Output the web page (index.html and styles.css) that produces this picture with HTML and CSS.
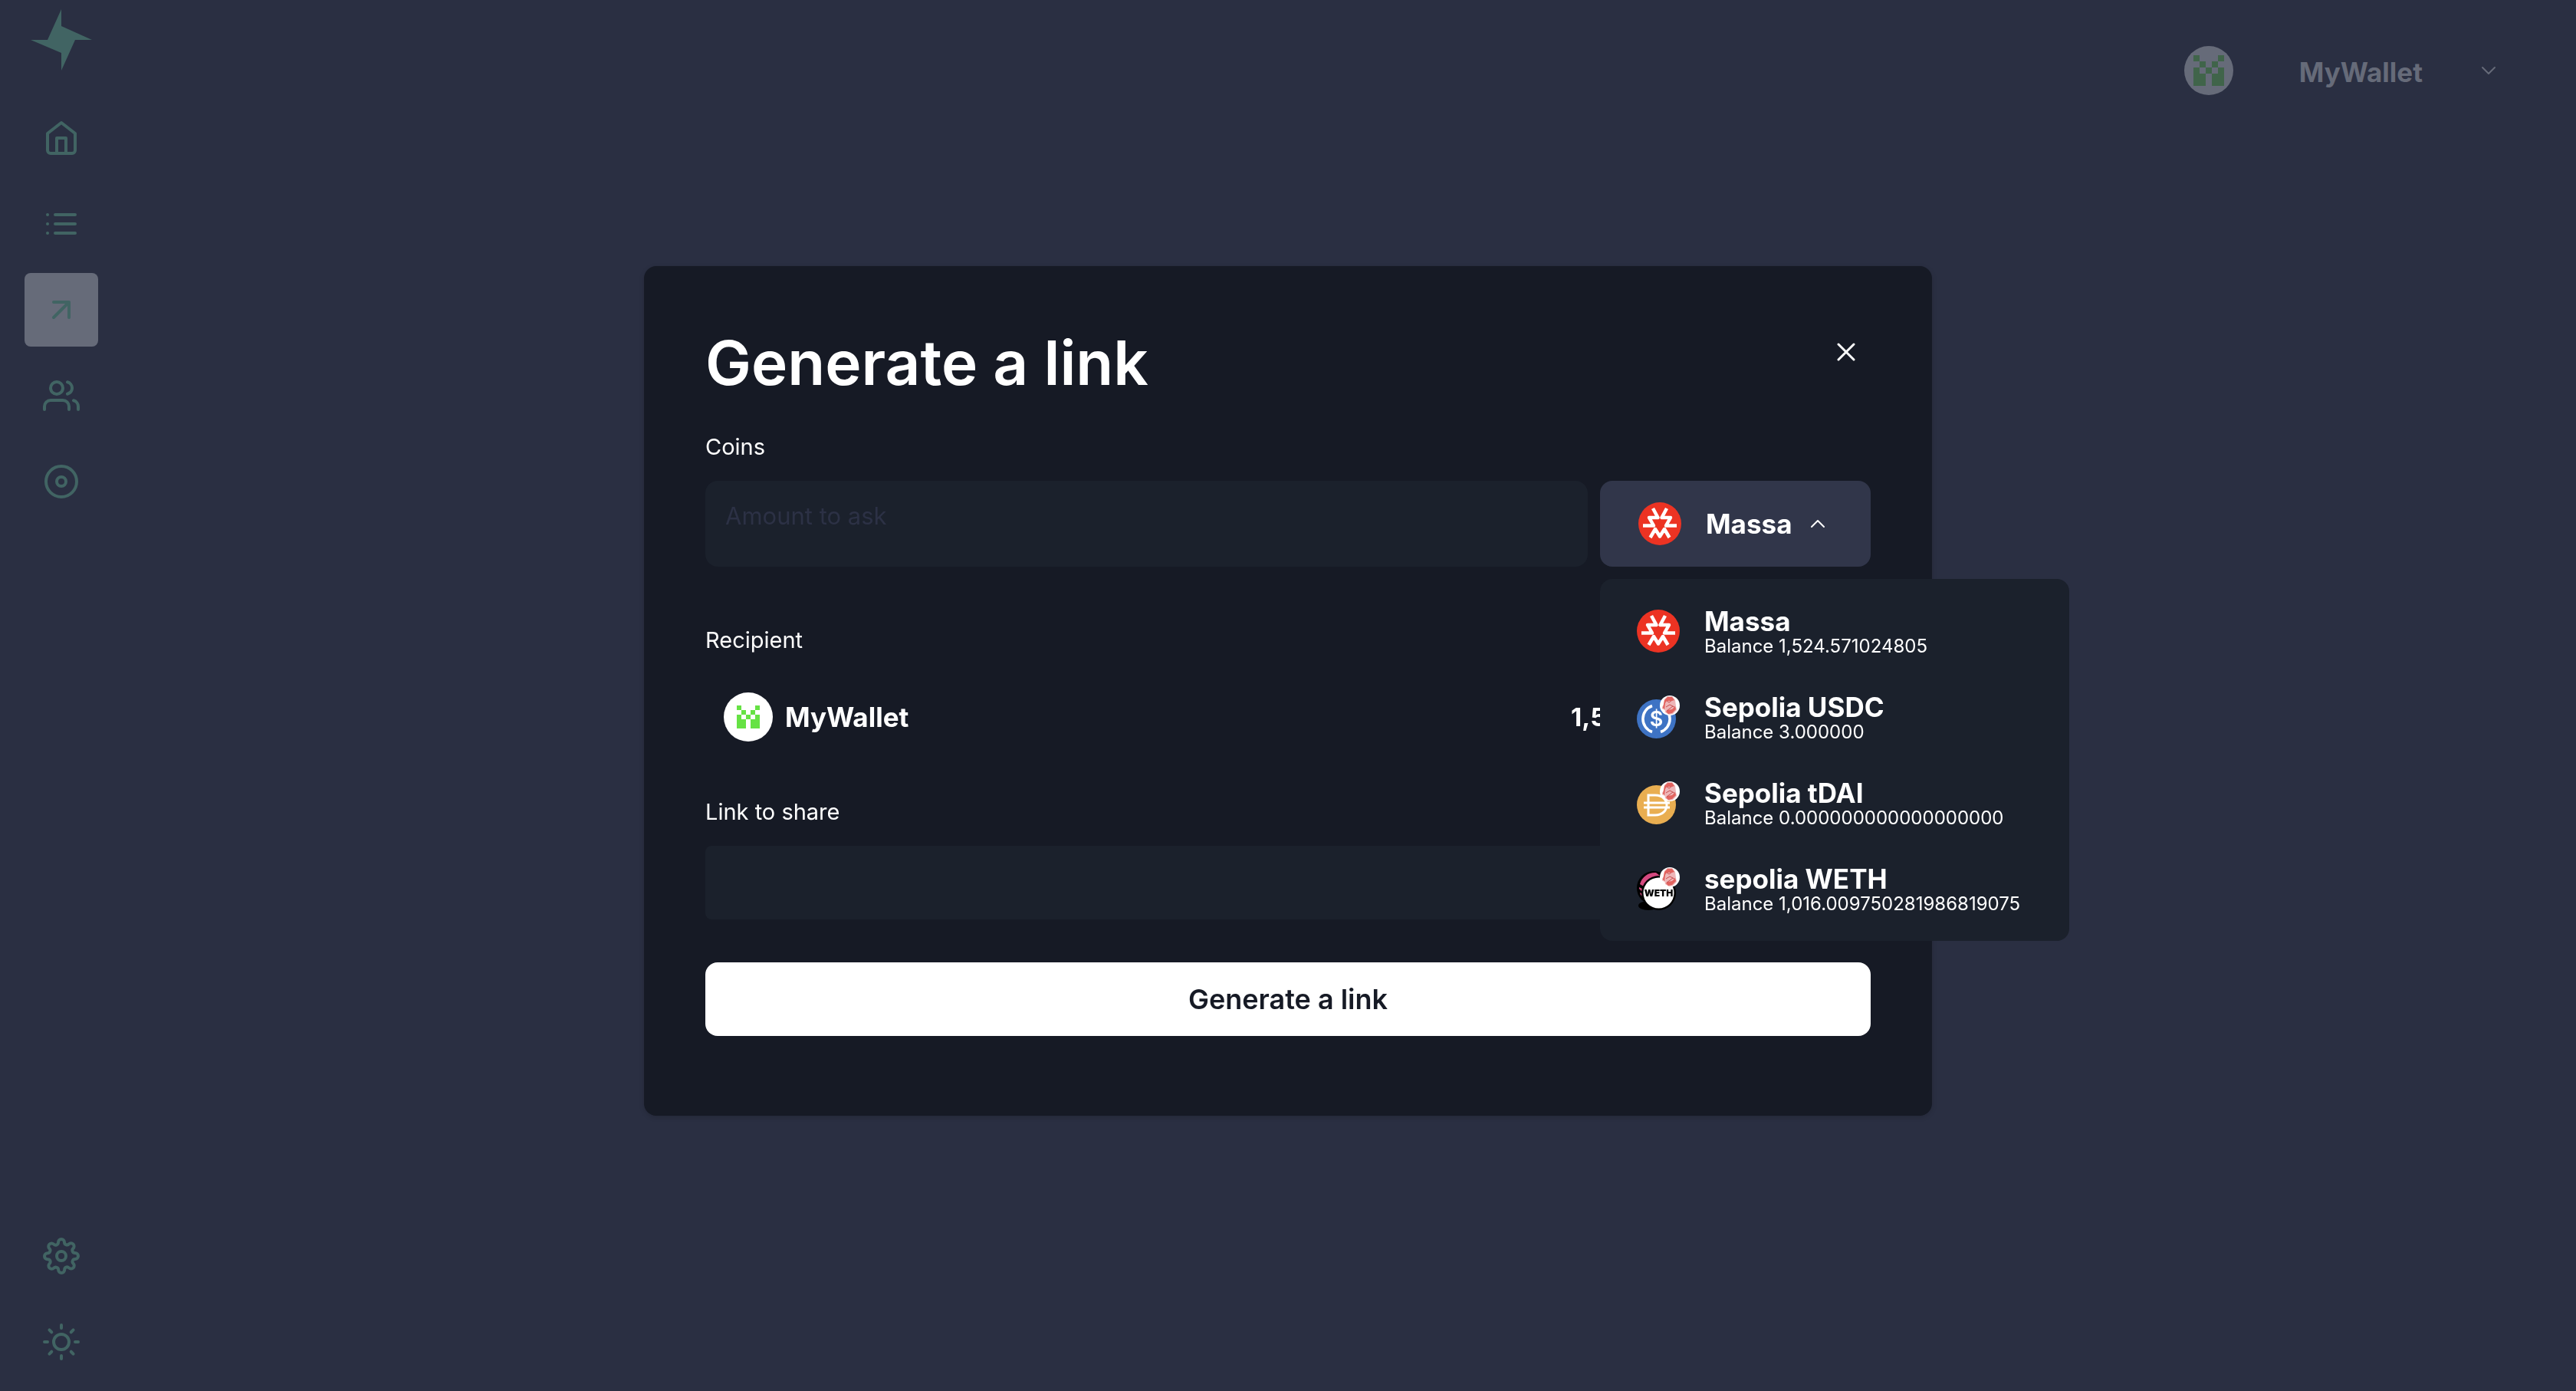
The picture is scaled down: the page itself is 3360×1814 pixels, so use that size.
FILE: index.html
```html
<!DOCTYPE html>
<html lang="en">
<head>
<meta charset="utf-8">
<meta name="viewport" content="width=device-width, initial-scale=1">
<title>Generate a link</title>
<link rel="stylesheet" href="styles.css">
</head>
<body>
<svg class="defs" aria-hidden="true">
  <symbol id="identicon" viewBox="0 0 5 5">
    <path shape-rendering="crispEdges" fill="currentColor" d="M0 0h1v1H0zM4 0h1v1H4zM1 1h1v1H1zM3 1h1v1H3zM2 2h1v1H2zM0 2h1v1h1v2H0zM4 2h1v3H3V3h1z"/>
  </symbol>
  <symbol id="massa" viewBox="0 0 56 56">
    <circle cx="28" cy="28" r="28" fill="#ec3323"/>
    <g fill="none" stroke="#fff" stroke-width="4.500" stroke-linejoin="round">
      <path d="M19 8l6.500 12H14l6 10.500H6M37 8l-6.500 12H42l-6 10.500h14M15.500 46l6.500-11 6 9.500 6-9.500 6.500 11"/>
    </g>
  </symbol>
  <symbol id="chain-badge" viewBox="0 0 26 26">
    <circle cx="13" cy="13" r="13" fill="#fff"/>
    <path d="M3 15l2-3 1-7 4-4h6l4 5 1 8 1 5-5 5-5 1-5-3-1-6-3 2z" fill="#eeb6b8"/>
    <path d="M6 6l4-4h6l3 4-3 1H9l-2 3-1 9-2-3 1-5zM10 19l6-1 4-4 1 4-5 5-5 1-3-3z" fill="#e2635f"/>
    <path d="M9 7l3 2 3-2M8 15l5-3 6 3M9 20l8-6" fill="none" stroke="#c84f50"/>
  </symbol>
</svg>

<div class="app">
  <nav class="sidebar" aria-label="Main">
    <a class="logo" href="#" aria-label="Home page"><svg viewBox="0 0 80 80"><path fill="currentColor" d="M40 0v22l40 18H58L40 80V57L0 40h22z"/></svg></a>
    <a class="nav-item" href="#" aria-label="Dashboard"><svg class="icon" viewBox="0 0 24 24"><path d="M3 9l9-7 9 7v11a2 2 0 0 1-2 2H5a2 2 0 0 1-2-2zM9 22V12h6v10"/></svg></a>
    <a class="nav-item" href="#" aria-label="Transactions"><svg class="icon" viewBox="0 0 24 24"><path d="M8 6h13M8 12h13M8 18h13M3 6h.01M3 12h.01M3 18h.01"/></svg></a>
    <a class="nav-item nav-item-active" href="#" aria-current="page" aria-label="Send or receive"><svg class="icon" viewBox="0 0 24 24"><path d="M7 17L17 7M7 7h10v10"/></svg></a>
    <a class="nav-item" href="#" aria-label="Contacts"><svg class="icon" viewBox="0 0 24 24"><path d="M17 21v-2a4 4 0 0 0-4-4H5a4 4 0 0 0-4 4v2M23 21v-2a4 4 0 0 0-3-3.87M16 3.13a4 4 0 0 1 0 7.75"/><circle cx="9" cy="7" r="4"/></svg></a>
    <a class="nav-item" href="#" aria-label="Assets"><svg class="icon" viewBox="0 0 24 24"><circle cx="12" cy="12" r="10"/><circle cx="12" cy="12" r="3"/></svg></a>
    <a class="nav-item nav-item-bottom" href="#" aria-label="Settings"><svg class="icon" viewBox="0 0 24 24"><circle cx="12" cy="12" r="3"/><path d="M19.4 15a1.65 1.65 0 0 0 .33 1.82l.06.06a2 2 0 0 1 0 2.83 2 2 0 0 1-2.83 0l-.06-.06a1.65 1.65 0 0 0-1.82-.33 1.65 1.65 0 0 0-1 1.51V21a2 2 0 0 1-2 2 2 2 0 0 1-2-2v-.09A1.65 1.65 0 0 0 9 19.4a1.65 1.65 0 0 0-1.82.33l-.06.06a2 2 0 0 1-2.83 0 2 2 0 0 1 0-2.83l.06-.06a1.65 1.65 0 0 0 .33-1.82 1.65 1.65 0 0 0-1.51-1H3a2 2 0 0 1-2-2 2 2 0 0 1 2-2h.09A1.65 1.65 0 0 0 4.6 9a1.65 1.65 0 0 0-.33-1.82l-.06-.06a2 2 0 0 1 0-2.83 2 2 0 0 1 2.83 0l.06.06a1.65 1.65 0 0 0 1.82.33H9a1.65 1.65 0 0 0 1-1.51V3a2 2 0 0 1 2-2 2 2 0 0 1 2 2v.09a1.65 1.65 0 0 0 1 1.51 1.65 1.65 0 0 0 1.82-.33l.06-.06a2 2 0 0 1 2.83 0 2 2 0 0 1 0 2.83l-.06.06a1.65 1.65 0 0 0-.33 1.82V9a1.65 1.65 0 0 0 1.51 1H21a2 2 0 0 1 2 2 2 2 0 0 1-2 2h-.09a1.65 1.65 0 0 0-1.51 1z"/></svg></a>
    <button class="nav-item" type="button" aria-label="Switch theme"><svg class="icon" viewBox="0 0 24 24"><circle cx="12" cy="12" r="5"/><path d="M12 1v2M12 21v2M4.22 4.22l1.42 1.42M18.36 18.36l1.42 1.42M1 12h2M21 12h2M4.22 19.78l1.42-1.42M18.36 5.64l1.42-1.42"/></svg></button>
  </nav>
  <header class="topbar">
    <button class="account" type="button">
      <span class="avatar avatar-account"><svg><use href="#identicon"/></svg></span>
      <span class="account-name">MyWallet</span>
      <svg class="chevron" viewBox="0 0 20 12"><path d="M2 2l8 8 8-8"/></svg>
    </button>
  </header>
</div>

<div class="overlay">
  <form class="modal" role="dialog" aria-modal="true" aria-labelledby="modal-title">
    <div class="modal-header">
      <h1 class="modal-title" id="modal-title">Generate a link</h1>
      <button class="close" type="button" aria-label="Close"><svg viewBox="0 0 24 24"><path d="M2 2l20 20M22 2L2 22"/></svg></button>
    </div>

    <div class="field">
      <label class="label" for="amount">Coins</label>
      <div class="coins-row">
        <input class="input input-amount" id="amount" type="text" placeholder="Amount to ask">
        <div class="token">
          <button class="token-button" type="button" aria-haspopup="listbox" aria-expanded="true">
            <svg class="token-icon"><use href="#massa"/></svg>
            <span class="token-name">Massa</span>
            <svg class="chevron" viewBox="0 0 20 12"><path d="M2 10l8-8 8 8"/></svg>
          </button>
          <ul class="token-menu" role="listbox" aria-label="Token">
            <li class="token-option" role="option" aria-selected="true">
              <svg class="token-icon"><use href="#massa"/></svg>
              <div class="token-text"><p class="token-name">Massa</p><p class="token-balance">Balance 1,524.571024805</p></div>
            </li>
            <li class="token-option" role="option" aria-selected="false">
              <svg class="token-icon" viewBox="0 0 56 56">
                <circle cx="25.5" cy="30.5" r="25.5" fill="#3e73c4"/>
                <path d="M20 13.500a18 18 0 0 0 0 34M31 13.500a18 18 0 0 1 0 34" fill="none" stroke="#fff" stroke-width="3.500"/>
                <text class="usdc-mark" x="25.500" y="40">$</text>
                <use href="#chain-badge" x="30" y="0" width="26" height="26"/>
              </svg>
              <div class="token-text"><p class="token-name">Sepolia USDC</p><p class="token-balance">Balance 3.000000</p></div>
            </li>
            <li class="token-option" role="option" aria-selected="false">
              <svg class="token-icon" viewBox="0 0 56 56">
                <circle cx="25.5" cy="30.5" r="25.5" fill="#e9ae51"/>
                <path d="M15 18h9c20 0 20 26 0 26h-9zM9 28h34M9 34h34" fill="none" stroke="#fff" stroke-width="3"/>
                <use href="#chain-badge" x="30" y="0" width="26" height="26"/>
              </svg>
              <div class="token-text"><p class="token-name">Sepolia tDAI</p><p class="token-balance">Balance 0.000000000000000000</p></div>
            </li>
            <li class="token-option" role="option" aria-selected="false">
              <svg class="token-icon" viewBox="0 0 56 56">
                <ellipse cx="15" cy="50" rx="13" ry="6"/>
                <circle cx="22" cy="27" r="22"/>
                <path d="M4 22A20 20 0 0 1 25 7l5 4Q15 13 9 25zM3 26l4 2v4l-4-4zM4 33l4 2 1 5-4-4z" fill="#d4497f"/>
                <circle cx="28.5" cy="33.500" r="22.500"/>
                <circle cx="28.5" cy="33.500" r="20" fill="#fff"/>
                <text class="weth-mark" x="28.500" y="38">WETH</text>
                <use href="#chain-badge" x="30" y="0" width="26" height="26"/>
              </svg>
              <div class="token-text"><p class="token-name">sepolia WETH</p><p class="token-balance">Balance 1,016.009750281986819075</p></div>
            </li>
          </ul>
        </div>
      </div>
    </div>

    <div class="field field-recipient">
      <p class="label">Recipient</p>
      <div class="recipient">
        <span class="avatar"><svg><use href="#identicon"/></svg></span>
        <span class="recipient-name">MyWallet</span>
        <span class="recipient-balance">1,524.571024805 MAS</span>
      </div>
    </div>

    <div class="field">
      <label class="label" for="link">Link to share</label>
      <input class="input input-link" id="link" type="text" readonly>
    </div>

    <button class="submit" type="button">Generate a link</button>
  </form>
</div>
</body>
</html>
```

FILE: styles.css
```css
* {
  box-sizing: border-box;
}

body,
h1,
p,
ul {
  margin: 0;
  padding: 0;
}

body {
  background: #2a2f42;
  color: #fff;
  font-family: Inter, "Liberation Sans", sans-serif;
}

button,
input {
  border: 0;
  background: none;
  color: inherit;
  font: inherit;
}

button {
  padding: 0;
  cursor: pointer;
}

svg {
  display: block;
}

.defs {
  position: absolute;
  width: 0;
  height: 0;
}

.app {
  display: flex;
  min-height: 100vh;
}

/* Sidebar, dimmed while the dialog is open */
.sidebar {
  display: flex;
  flex-direction: column;
  align-items: center;
  gap: 16px;
  width: 160px;
  padding: 12px 0 16px;
  color: #416463;
}

.logo {
  width: 80px;
  height: 80px;
  margin-bottom: 24px;
  color: inherit;
}

.nav-item {
  display: grid;
  place-items: center;
  width: 96px;
  height: 96px;
  border-radius: 8px;
  color: inherit;
}

.nav-item-active {
  background: #666b79;
}

.nav-item-bottom {
  margin-top: auto;
}

.icon {
  width: 48px;
  height: 48px;
  fill: none;
  stroke: currentColor;
  stroke-width: 2;
  stroke-linecap: round;
  stroke-linejoin: round;
}

.topbar {
  display: flex;
  flex: 1;
  align-items: flex-start;
  justify-content: flex-end;
  padding: 60px 104px 0 0;
}

.account {
  display: flex;
  align-items: center;
  height: 64px;
  color: #666b79;
}

.account-name {
  margin: 0 76px 0 86px;
  padding-top: 4px;
  font-size: 35px;
  font-weight: 700;
}

.avatar {
  display: grid;
  place-items: center;
  width: 64px;
  height: 64px;
  border-radius: 50%;
  background: #fff;
  color: #66e244;
}

.avatar svg {
  width: 30px;
  height: 30px;
}

.avatar-account {
  background: #666b79;
  color: #40644a;
}

.avatar-account svg {
  width: 40px;
  height: 40px;
}

.chevron {
  width: 20px;
  height: 12px;
  fill: none;
  stroke: currentColor;
  stroke-width: 2;
  stroke-linecap: round;
  stroke-linejoin: round;
}

/* Dialog */
.overlay {
  position: fixed;
  inset: 0;
  display: grid;
  grid-template-columns: 50%;
  place-content: center;
  padding-bottom: 12px;
}

.modal {
  padding: 80px 80px 104px;
  border-radius: 16px;
  background: #161a25;
  box-shadow: 0 2px 6px rgba(0, 0, 0, 0.15);
}

.modal-header {
  display: flex;
  justify-content: space-between;
  margin-bottom: 40px;
}

.modal-title {
  font-size: 80px;
  font-weight: 600;
  line-height: 92px;
  padding-bottom: 4px;
}

.close {
  display: grid;
  place-items: center;
  width: 64px;
  height: 64px;
}

.close svg {
  width: 24px;
  height: 24px;
  fill: none;
  stroke: currentColor;
  stroke-width: 3;
  stroke-linecap: round;
}

.field {
  margin-bottom: 56px;
}

.field-recipient {
  margin: 76px 0 48px;
}

.label {
  display: block;
  margin-bottom: 24px;
  font-size: 29px;
  line-height: 40px;
}

.coins-row {
  display: flex;
  gap: 16px;
}

.input {
  width: 100%;
  background: #1b212c;
}

.input-amount {
  flex: 1;
  height: 112px;
  padding: 0 26px 22px;
  border-radius: 16px;
  font-size: 31px;
}

.input-amount::placeholder {
  color: #2c3145;
  opacity: 1;
}

.input-link {
  display: block;
  height: 96px;
  padding: 0 26px;
  border-radius: 8px;
  font-size: 31px;
}

.token {
  position: relative;
}

.token-button {
  display: flex;
  align-items: center;
  width: 353px;
  height: 112px;
  padding: 0 50px;
  border-radius: 16px;
  background: #31364a;
}

.token-button .chevron {
  margin-left: 24px;
}

.token-icon {
  flex: none;
  width: 56px;
  height: 56px;
  margin-right: 32px;
}

.token-text {
  padding-top: 4px;
}

.token-name {
  font-size: 35px;
  font-weight: 700;
  line-height: 36px;
}

.token-balance {
  font-size: 24px;
  line-height: 30px;
}

.token-menu {
  position: absolute;
  z-index: 1;
  top: calc(100% + 16px);
  left: 0;
  width: 612px;
  padding: 12px 0;
  border-radius: 16px;
  background: #1b212c;
  list-style: none;
}

.token-option {
  display: flex;
  align-items: center;
  height: 112px;
  padding: 0 48px;
  white-space: nowrap;
}

.usdc-mark {
  fill: #fff;
  font-size: 27px;
  font-weight: 600;
  text-anchor: middle;
}

.weth-mark {
  fill: #000;
  font-size: 12px;
  font-weight: 900;
  text-anchor: middle;
}

.recipient {
  display: flex;
  align-items: center;
  gap: 16px;
  padding: 24px;
  font-weight: 700;
}

.recipient-name {
  font-size: 35px;
}

.recipient-balance {
  margin-left: auto;
  font-size: 33px;
}

.submit {
  width: 100%;
  height: 96px;
  border-radius: 16px;
  background: #fff;
  color: #161a25;
  font-size: 36px;
  font-weight: 600;
}
```
